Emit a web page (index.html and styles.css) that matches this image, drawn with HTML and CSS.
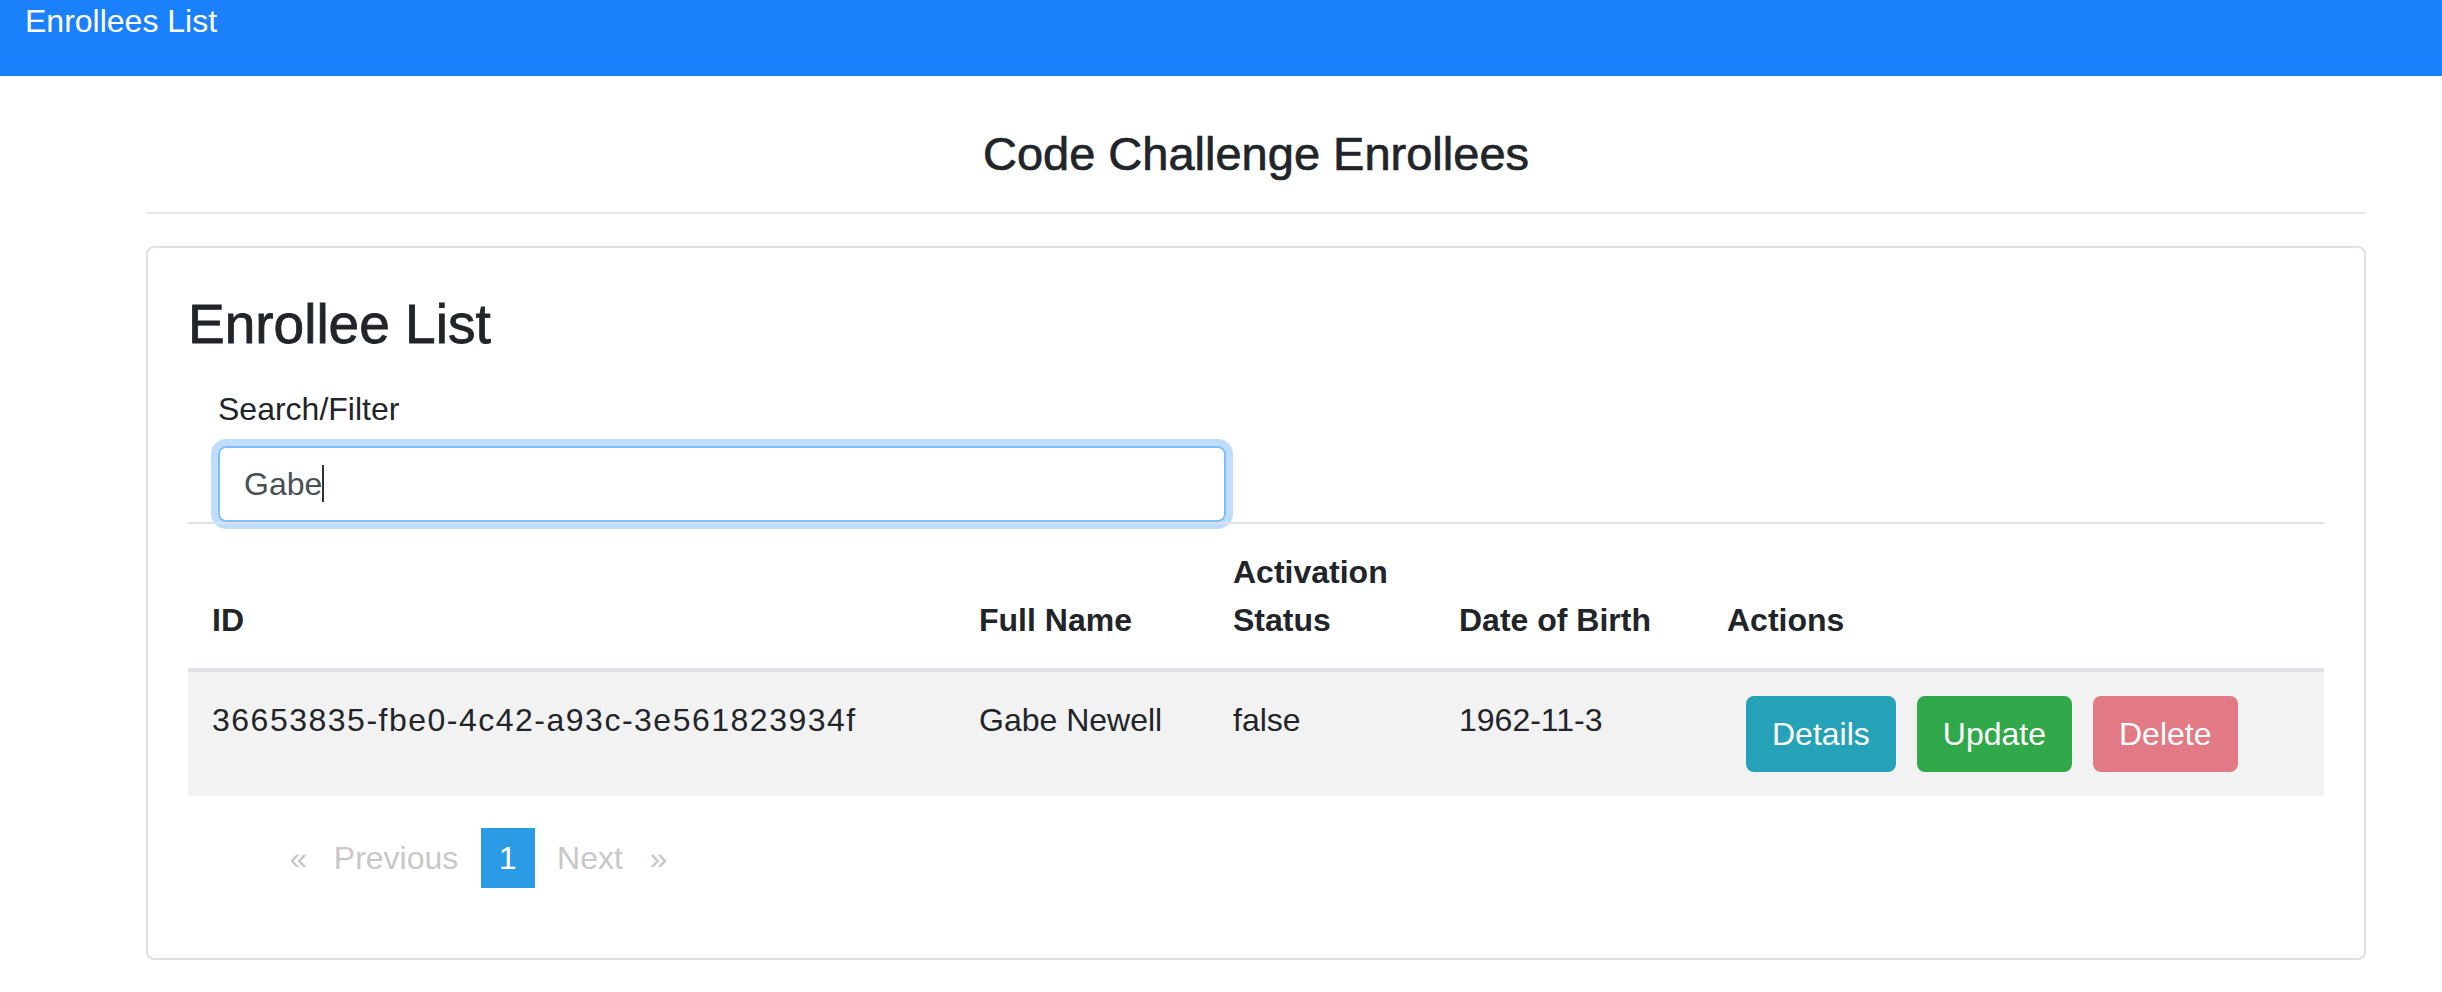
FILE: index.html
```html
<!DOCTYPE html>
<html lang="en">
<head>
<meta charset="utf-8">
<title>Enrollees List</title>
<link rel="stylesheet" href="styles.css">
</head>
<body>
<nav class="navbar"><span class="brand">Enrollees List</span></nav>
<main class="container">
  <h3 class="page-title">Code Challenge Enrollees</h3>
  <hr class="divider">
  <section class="card">
    <div class="card-body">
      <h2 class="card-title">Enrollee List</h2>
      <div class="filter">
        <label class="filter-label">Search/Filter</label>
        <div class="form-control"><span class="value">Gabe</span><span class="caret"></span></div>
      </div>
      <table class="table">
        <colgroup>
          <col class="c-id"><col class="c-name"><col class="c-status"><col class="c-dob"><col class="c-actions">
        </colgroup>
        <thead>
          <tr><th>ID</th><th>Full Name</th><th>Activation Status</th><th>Date of Birth</th><th>Actions</th></tr>
        </thead>
        <tbody>
          <tr class="striped">
            <td><span class="id-text">36653835-fbe0-4c42-a93c-3e561823934f</span></td>
            <td>Gabe Newell</td>
            <td>false</td>
            <td>1962-11-3</td>
            <td>
              <div class="actions">
                <button class="btn btn-info">Details</button>
                <button class="btn btn-success">Update</button>
                <button class="btn btn-danger">Delete</button>
              </div>
            </td>
          </tr>
        </tbody>
      </table>
      <ul class="pagination">
        <li class="pg-arrow">«</li>
        <li class="pg-link">Previous</li>
        <li class="pg-link active">1</li>
        <li class="pg-link">Next</li>
        <li class="pg-arrow">»</li>
      </ul>
    </div>
  </section>
</main>
</body>
</html>
```
FILE: styles.css
```css
* { box-sizing: border-box; }

body {
  margin: 0;
  font-family: "Liberation Sans", Arial, sans-serif;
  font-size: 32px;
  line-height: 48px;
  color: #212529;
  background: #fff;
}

.navbar {
  height: 76px;
  background: #1a80fc;
  padding: 2px 25px 0;
}

.brand {
  display: block;
  color: #fff;
  font-size: 32px;
  line-height: 38px;
}

.container {
  margin-left: 146px;
  width: 2220px;
  padding-top: 50px;
}

.page-title {
  margin: 0;
  font-size: 47px;
  line-height: 56px;
  font-weight: normal;
  text-align: center;
  -webkit-text-stroke: 0.7px #212529;
}

.divider {
  height: 0;
  border: 0;
  border-top: 2px solid #e6e6e6;
  margin: 30px 0 32px;
}

.card {
  border: 2px solid #e0e0e0;
  border-radius: 8px;
}

.card-body {
  padding: 40px;
}

.card-title {
  margin: 3px 0 28px;
  font-size: 55px;
  line-height: 66px;
  font-weight: normal;
  -webkit-text-stroke: 0.8px #212529;
}

.filter {
  width: 50%;
  padding: 0 30px;
}

.filter-label {
  display: block;
  margin-bottom: 13px;
}

.form-control {
  height: 76px;
  border: 2px solid #80bdff;
  border-radius: 8px;
  padding: 12px 24px;
  color: #495057;
  line-height: 48px;
  box-shadow: 0 0 0 7px rgba(0, 123, 255, 0.25);
  white-space: nowrap;
}

.caret {
  display: inline-block;
  width: 2px;
  height: 37px;
  background: #333;
  vertical-align: -7px;
}

.table {
  width: 100%;
  border-collapse: collapse;
  table-layout: fixed;
  margin-bottom: 32px;
}

.c-id { width: 767px; }
.c-name { width: 254px; }
.c-status { width: 226px; }
.c-dob { width: 268px; }
.c-actions { width: 621px; }

.table th,
.table td {
  padding: 24px;
  text-align: left;
  vertical-align: top;
  border-top: 2px solid #dee2e6;
}

.table thead th {
  vertical-align: bottom;
  border-bottom: 4px solid #dee2e6;
  font-weight: bold;
}

.striped td {
  background: #f2f2f2;
}

.id-text {
  letter-spacing: 1.5px;
  white-space: nowrap;
}

.actions {
  display: flex;
  gap: 21px;
  padding-left: 19px;
}

.btn {
  height: 76px;
  padding: 12px 24px;
  border: 2px solid transparent;
  border-radius: 8px;
  font-family: inherit;
  font-size: 32px;
  line-height: 48px;
  color: #fff;
}

.btn-info { background: #26a2b8; border-color: #26a2b8; }
.btn-success { background: #31a84a; border-color: #31a84a; }
.btn-danger { background: #e27a85; border-color: #e27a85; }

.pagination {
  list-style: none;
  display: flex;
  gap: 4.5px;
  margin: 0 0 30px;
  padding: 0 0 0 97.5px;
  color: #c8c8c8;
}

.pg-arrow {
  padding: 6px 4px;
}

.pg-link {
  padding: 6px 18px;
}

.pg-link.active {
  background: #2b9be6;
  color: #fff;
}
```
